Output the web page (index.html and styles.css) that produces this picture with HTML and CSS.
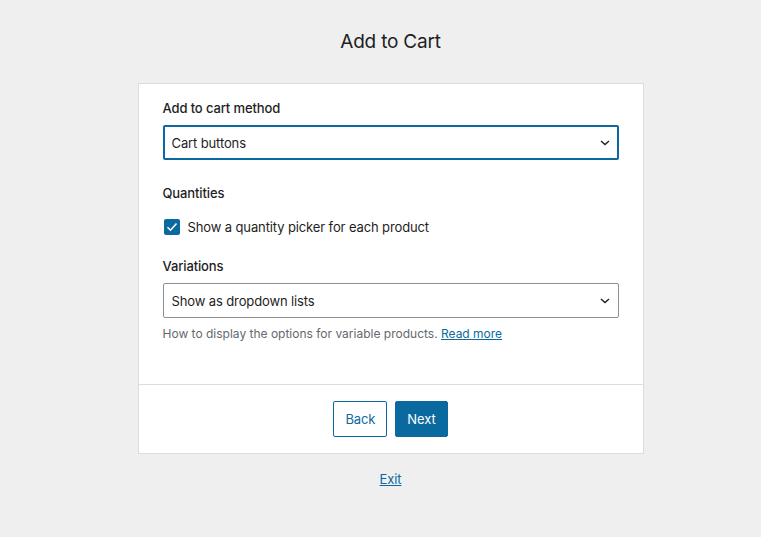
FILE: index.html
```html
<!DOCTYPE html>
<html>
<head>
<meta charset="utf-8">
<link rel="stylesheet" href="styles.css">
</head>
<body>
<div class="page">
  <h1 class="title">Add to Cart</h1>
  <div class="card">
    <div class="card-body">
      <div class="field">
        <div class="label">Add to cart method</div>
        <div class="select select-focus">
          <span>Cart buttons</span>
          <svg class="chev" width="10" height="6" viewBox="0 0 10 6"><path d="M1 1 L5 4.5 L9 1" fill="none" stroke="#1e1e1e" stroke-width="1.4"/></svg>
        </div>
      </div>
      <div class="field field-q">
        <div class="label">Quantities</div>
        <div class="check-row">
          <span class="checkbox"><svg width="12" height="10" viewBox="0 0 12 10"><path d="M1.5 5.2 L4.5 8.2 L10.5 1.5" fill="none" stroke="#fff" stroke-width="1.5"/></svg></span>
          <span>Show a quantity picker for each product</span>
        </div>
      </div>
      <div class="field field-v">
        <div class="label">Variations</div>
        <div class="select">
          <span>Show as dropdown lists</span>
          <svg class="chev" width="10" height="6" viewBox="0 0 10 6"><path d="M1 1 L5 4.5 L9 1" fill="none" stroke="#1e1e1e" stroke-width="1.4"/></svg>
        </div>
        <p class="help">How to display the options for variable products. <a href="#">Read more</a></p>
      </div>
    </div>
    <div class="card-footer">
      <button class="btn btn-secondary">Back</button>
      <button class="btn btn-primary">Next</button>
    </div>
  </div>
  <div class="exit"><a href="#">Exit</a></div>
</div>
</body>
</html>
```
FILE: styles.css
```css
html, body {
  margin: 0;
  padding: 0;
  background: #efefef;
}
body {
  font-family: Inter, "Liberation Sans", sans-serif;
  font-size: 13px;
  letter-spacing: -0.12px;
  color: #1e1e1e;
}
.page {
  padding: 30px 0 0 20px;
  display: flex;
  flex-direction: column;
  align-items: center;
}
.title {
  margin: 0;
  font-size: 19px;
  line-height: 24px;
  font-weight: 400;
  letter-spacing: -0.2px;
  color: #1e1e1e;
}
.card {
  margin-top: 29px;
  width: 506px;
  box-sizing: border-box;
  background: #fff;
  border: 1px solid #dcdcde;
}
.card-body {
  padding: 16px 24px 42px;
}
.label {
  font-weight: 500;
  line-height: 16px;
  margin-bottom: 9px;
}
.select {
  box-sizing: border-box;
  height: 35px;
  border: 1px solid #8c8f94;
  border-radius: 2px;
  display: flex;
  align-items: center;
  justify-content: space-between;
  padding: 0 8px 0 8px;
}
.select-focus {
  height: 35px;
  border: 2px solid #0a6aa0;
  padding: 0 7px 0 7px;
}
.chev {
  margin-top: 1px;
}
.field-q {
  margin-top: 25px;
}
.check-row {
  display: flex;
  align-items: center;
  gap: 8px;
  margin-top: 18px;
  line-height: 16px;
}
.checkbox {
  width: 16px;
  height: 16px;
  box-sizing: border-box;
  background: #0a6aa0;
  border-radius: 2px;
  display: flex;
  align-items: center;
  justify-content: center;
  margin-left: 1px;
}
.field-v {
  margin-top: 23px;
}
.help {
  margin: 8px 0 0;
  font-size: 12px;
  line-height: 16px;
  letter-spacing: 0;
  color: #646970;
}
.help a {
  color: #0a6aa0;
}
.card-footer {
  border-top: 1px solid #dcdcde;
  padding: 16px 0;
  display: flex;
  justify-content: center;
  gap: 8px;
}
.btn {
  font-family: inherit;
  font-size: 13px;
  letter-spacing: -0.12px;
  height: 36px;
  padding: 0 11px;
  border-radius: 2px;
  cursor: pointer;
}
.btn-secondary {
  background: #fff;
  border: 1px solid #0a6aa0;
  color: #0a6aa0;
}
.btn-primary {
  background: #0a6aa0;
  border: 1px solid #0a6aa0;
  color: #fff;
}
.exit {
  margin-top: 17px;
  line-height: 16px;
}
.exit a {
  color: #0a6aa0;
}
```
